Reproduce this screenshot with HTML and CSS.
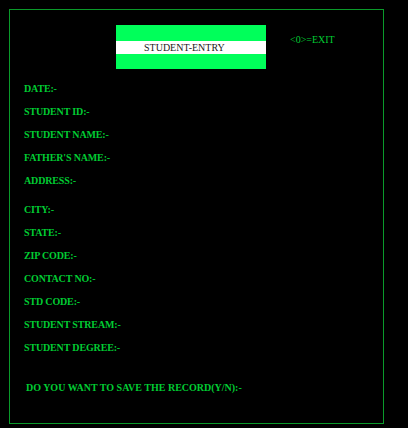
FILE: index.html
```html
<!DOCTYPE html>
<html>
<head>
<meta charset="utf-8">
<link rel="stylesheet" href="styles.css">
</head>
<body>
<div class="frame">
  <div class="header">
    <div class="title-box"><div class="title-band">STUDENT-ENTRY</div></div>
    <div class="exit">&lt;0&gt;=EXIT</div>
  </div>
  <div class="fields">
    <div class="label">DATE:-</div>
    <div class="label">STUDENT ID:-</div>
    <div class="label">STUDENT NAME:-</div>
    <div class="label">FATHER'S NAME:-</div>
    <div class="label">ADDRESS:-</div>
    <div class="label city">CITY:-</div>
    <div class="label">STATE:-</div>
    <div class="label">ZIP CODE:-</div>
    <div class="label">CONTACT NO:-</div>
    <div class="label">STD CODE:-</div>
    <div class="label">STUDENT STREAM:-</div>
    <div class="label">STUDENT DEGREE:-</div>
    <div class="label save">DO YOU WANT TO SAVE THE RECORD(Y/N):-</div>
  </div>
</div>
</body>
</html>
```
FILE: styles.css
```css
html, body {
  margin: 0;
  padding: 0;
  background: #000;
}
body {
  font-family: "Liberation Serif", "Times New Roman", serif;
  font-size: 10px;
  width: 408px;
  height: 428px;
  overflow: hidden;
}
.frame {
  margin: 9px 0 0 9px;
  width: 375px;
  height: 415px;
  box-sizing: border-box;
  border: 1px solid #0a9a2a;
  padding: 15px 0 0 14px;
}
.header {
  display: flex;
  align-items: flex-start;
  margin-left: 92px;
}
.title-box {
  width: 150px;
  background: #00ff5a;
  padding: 16px 0 15px;
}
.title-band {
  background: #fff;
  height: 13px;
  line-height: 13px;
  padding-left: 28px;
  color: #1a1a1a;
}
.exit {
  margin-left: 24px;
  margin-top: 9px;
  line-height: 12px;
  color: #00cc33;
}
.fields {
  margin-top: 14px;
  display: flex;
  flex-direction: column;
  gap: 11px;
}
.label {
  line-height: 12px;
  font-weight: bold;
  color: #00cc33;
  white-space: nowrap;
  letter-spacing: -0.15px;
}
.city {
  margin-top: 6px;
}
.save {
  margin-top: 17px;
  padding-left: 2px;
  letter-spacing: 0;
}
```
